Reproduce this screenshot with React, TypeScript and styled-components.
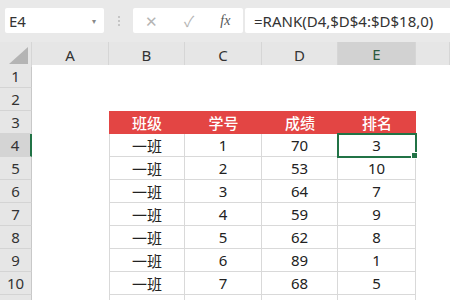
import React from "react";
import styled, { createGlobalStyle, css } from "styled-components";

const GlobalStyle = createGlobalStyle`
  html, body {
    margin: 0;
    padding: 0;
    background: #ffffff;
  }
  body {
    width: 450px;
    height: 300px;
    overflow: hidden;
    font-family: "Noto Sans", "Noto Sans CJK SC", sans-serif;
  }
`;

const Window = styled.div`
  width: 450px;
  height: 300px;
  display: flex;
  flex-direction: column;
  overflow: hidden;
`;

const TopBar = styled.div`
  height: 42px;
  flex-shrink: 0;
  display: flex;
  align-items: flex-start;
  padding: 8px 0 0 5px;
  box-sizing: border-box;
  background: #e9e9e9;
`;

const NameBox = styled.div`
  width: 99px;
  height: 25px;
  background: #ffffff;
  border-radius: 2px;
  display: flex;
  align-items: center;
  justify-content: space-between;
  padding: 0 8px 0 4px;
  box-sizing: border-box;
  font-size: 15px;
  color: #333333;
`;

const Caret = styled.span`
  font-size: 8px;
  color: #888888;
`;

const Grip = styled.div`
  width: 29px;
  height: 25px;
  display: flex;
  flex-direction: column;
  align-items: center;
  justify-content: center;
  gap: 2px;

  span {
    width: 2px;
    height: 2px;
    border-radius: 1px;
    background: #b8b8b8;
  }
`;

const ActionBox = styled.div`
  width: 110px;
  height: 25px;
  background: #ffffff;
  border-radius: 2px;
  display: flex;
  align-items: center;
  padding-left: 12px;
  gap: 26px;
  box-sizing: border-box;
  color: #b5b5b5;
  font-size: 15px;
`;

const Fx = styled.span`
  font-family: "Liberation Serif", serif;
  font-style: italic;
  font-size: 14px;
  color: #555555;
`;

const FormulaBox = styled.div`
  flex: 1;
  height: 25px;
  margin-left: 2px;
  background: #ffffff;
  border-radius: 2px 0 0 2px;
  display: flex;
  align-items: center;
  padding-left: 9px;
  font-size: 15px;
  color: #333333;
  white-space: nowrap;
`;

const Sheet = styled.div`
  display: grid;
  grid-template-columns: 32px 77px 76px 77px 76px 78px 1fr;
  grid-auto-rows: 23px;
  font-size: 15px;
  color: #222222;
`;

const Corner = styled.div`
  height: 25px;
  background: #e6e6e6;
  border-right: 1px solid #d6d6d6;
  box-sizing: border-box;
  position: relative;

  &::after {
    content: "";
    position: absolute;
    right: 3px;
    bottom: 3px;
    width: 19px;
    height: 17px;
    background: #b4b4b4;
    clip-path: polygon(100% 0, 100% 100%, 0 100%);
  }
`;

const ColHeader = styled.div<{ $active?: boolean }>`
  height: 25px;
  background: #e6e6e6;
  border-right: 1px solid #d6d6d6;
  box-sizing: border-box;
  display: flex;
  align-items: center;
  justify-content: center;
  color: #333333;
  ${(p) =>
    p.$active &&
    css`
      background: #d2d2d2;
      color: #2b5a40;
      border-bottom: 2px solid #217346;
    `}
`;

const RowHeader = styled.div<{ $active?: boolean }>`
  background: #e6e6e6;
  border-bottom: 1px solid #d4d4d4;
  border-right: 1px solid #c8c8c8;
  box-sizing: border-box;
  display: flex;
  align-items: center;
  justify-content: center;
  color: #333333;
  ${(p) =>
    p.$active &&
    css`
      background: #d4d4d4;
      border-right: 2px solid #217346;
    `}
`;

const Blank = styled.div`
  background: #ffffff;
`;

const HeadCell = styled.div`
  background: #e34544;
  color: #ffffff;
  font-family: "Noto Sans CJK SC", sans-serif;
  font-weight: 500;
  display: flex;
  align-items: center;
  justify-content: center;
`;

const Cell = styled.div<{ $first?: boolean; $selected?: boolean }>`
  background: #ffffff;
  border-right: 1px solid #d9d9d9;
  border-bottom: 1px solid #d9d9d9;
  border-left: ${(p) => (p.$first ? "1px solid #d9d9d9" : "none")};
  box-sizing: border-box;
  display: flex;
  align-items: center;
  justify-content: center;
  font-family: "Noto Sans", "Noto Sans CJK SC", sans-serif;
  position: relative;
  ${(p) =>
    p.$selected &&
    css`
      outline: 2px solid #217346;
      outline-offset: -1px;
      z-index: 1;

      &::after {
        content: "";
        position: absolute;
        right: -3px;
        bottom: -3px;
        width: 5px;
        height: 5px;
        background: #217346;
        border: 1px solid #ffffff;
      }
    `}
`;

const columns = ["A", "B", "C", "D", "E"];
const headings = ["班级", "学号", "成绩", "排名"];
const rows = [
  ["一班", "1", "70", "3"],
  ["一班", "2", "53", "10"],
  ["一班", "3", "64", "7"],
  ["一班", "4", "59", "9"],
  ["一班", "5", "62", "8"],
  ["一班", "6", "89", "1"],
  ["一班", "7", "68", "5"],
];

export default function App() {
  return (
    <Window>
      <GlobalStyle />
      <TopBar>
        <NameBox>
          E4
          <Caret>▾</Caret>
        </NameBox>
        <Grip>
          <span />
          <span />
          <span />
        </Grip>
        <ActionBox>
          <span>✕</span>
          <span>✓</span>
          <Fx>fx</Fx>
        </ActionBox>
        <FormulaBox>=RANK(D4,$D$4:$D$18,0)</FormulaBox>
      </TopBar>
      <Sheet>
        <Corner />
        {columns.map((c) => (
          <ColHeader key={c} $active={c === "E"}>
            {c}
          </ColHeader>
        ))}
        <ColHeader />

        {[1, 2].map((n) => (
          <React.Fragment key={n}>
            <RowHeader>{n}</RowHeader>
            {Array.from({ length: 6 }).map((_, i) => (
              <Blank key={i} />
            ))}
          </React.Fragment>
        ))}

        <RowHeader>3</RowHeader>
        <Blank />
        {headings.map((h) => (
          <HeadCell key={h}>{h}</HeadCell>
        ))}
        <Blank />

        {rows.map((r, ri) => (
          <React.Fragment key={ri}>
            <RowHeader $active={ri === 0}>{ri + 4}</RowHeader>
            <Blank />
            {r.map((v, ci) => (
              <Cell key={ci} $first={ci === 0} $selected={ri === 0 && ci === 3}>
                {v}
              </Cell>
            ))}
            <Blank />
          </React.Fragment>
        ))}

        <RowHeader />
        <Blank />
        {headings.map((h) => (
          <Cell key={h} $first={h === "班级"} />
        ))}
        <Blank />
      </Sheet>
    </Window>
  );
}
